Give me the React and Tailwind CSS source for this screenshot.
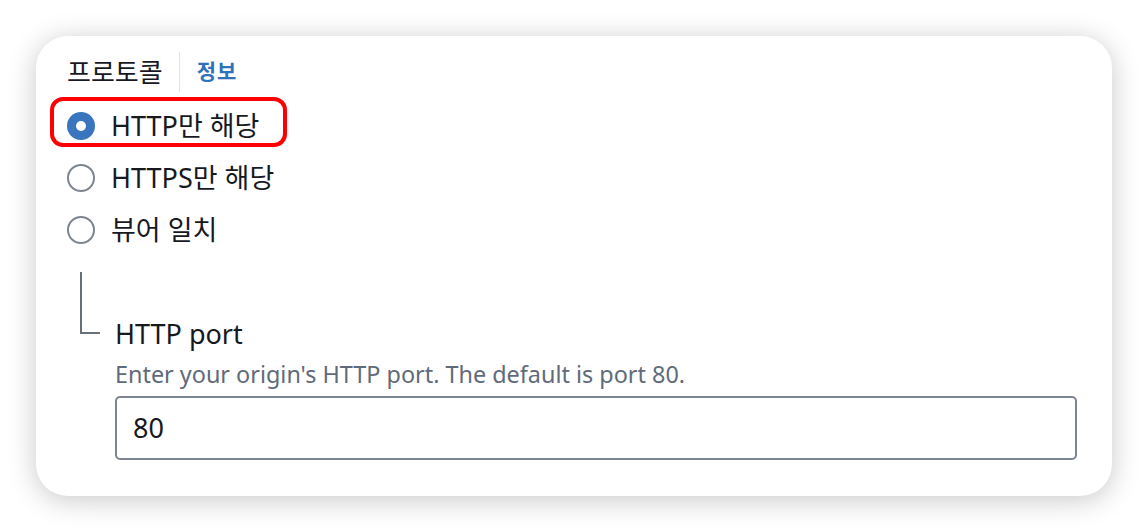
import React from "react";

const FONT = { fontFamily: '"Noto Sans", "Noto Sans CJK KR", sans-serif' };

function Radio({ checked }) {
  if (checked) {
    return (
      <span className="w-[28px] h-[28px] rounded-full bg-[#3a76bd] flex items-center justify-center shrink-0">
        <span className="w-[10px] h-[10px] rounded-full bg-white" />
      </span>
    );
  }
  return <span className="w-[28px] h-[28px] rounded-full border-2 border-[#7d8590] bg-white shrink-0" />;
}

export default function App() {
  return (
    <div className="w-[1148px] h-[532px] bg-white pt-[36px] pl-[36px]" style={FONT}>
      <div className="w-[1076px] h-[460px] bg-white rounded-[32px] shadow-[0_4px_28px_rgba(0,0,0,0.22)] pl-[31px] pr-[36px] pt-[16px] pb-[36px] text-[#16191f]">
        <div className="flex items-center h-[40px]">
          <span className="text-[26px] leading-[40px]">프로토콜</span>
          <span className="w-[1px] h-[40px] bg-[#e1e4e8] ml-[16px]" />
          <span className="text-[21px] font-bold text-[#2f72ba] ml-[17px] tracking-[1px]">정보</span>
        </div>
        <div className="mt-[8px] flex flex-col">
          <div className="relative h-[52px] flex items-center">
            <div className="absolute left-[-17px] top-[-3px] w-[237px] h-[50px] border-[4px] border-[#ff0000] rounded-[13px]" />
            <Radio checked />
            <span className="ml-[16px] text-[27px]">HTTP만 해당</span>
          </div>
          <div className="h-[52px] flex items-center">
            <Radio />
            <span className="ml-[16px] text-[27px]">HTTPS만 해당</span>
          </div>
          <div className="h-[52px] flex items-center">
            <Radio />
            <span className="ml-[16px] text-[27px]">뷰어 일치</span>
          </div>
        </div>
        <div className="flex mt-[16px]">
          <div className="ml-[13px] w-[20px] h-[62px] border-l-2 border-b-2 border-[#687078] shrink-0" />
          <div className="ml-[15px] mt-[46px] flex-1 flex flex-col">
            <div className="text-[27px] leading-[32px] font-normal">HTTP port</div>
            <div className="mt-[10px] text-[23.4px] leading-[28px] text-[#5f6b7a]">
              Enter your origin's HTTP port. The default is port 80.
            </div>
            <div className="mt-[8px] w-[962px] h-[64px] border-2 border-[#7d8590] rounded-[5px] flex items-center pl-[16px] text-[27px]">
              80
            </div>
          </div>
        </div>
      </div>
    </div>
  );
}
